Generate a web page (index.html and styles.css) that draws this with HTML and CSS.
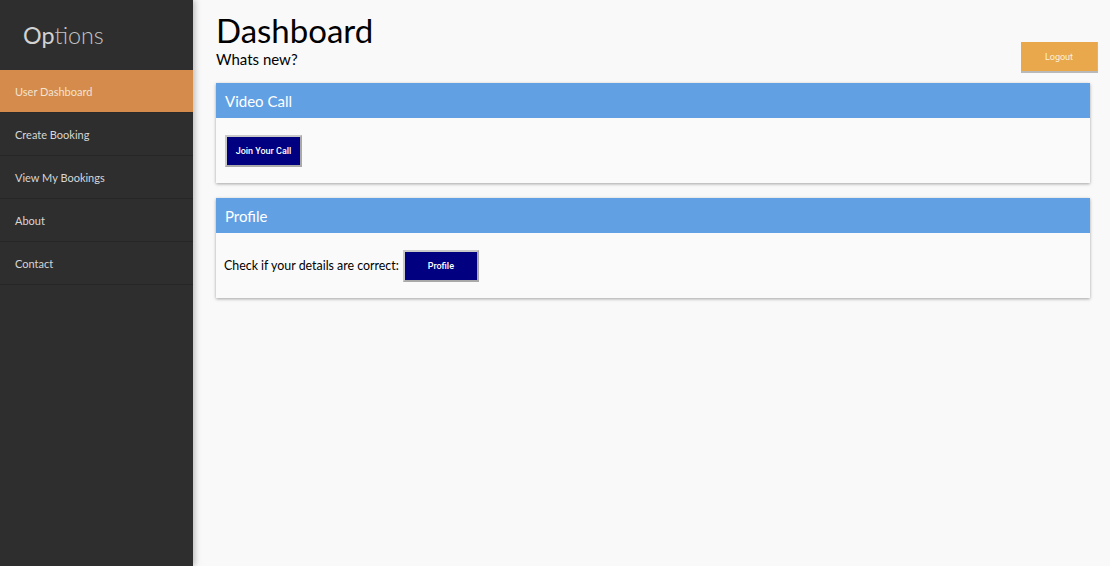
FILE: index.html
```html
<!DOCTYPE html>
<html>
<head>
<meta charset="utf-8">
<link rel="stylesheet" href="styles.css">
</head>
<body>
<div class="layout">
  <aside class="sidebar">
    <div class="brand"><span class="brand-strong">Op</span>tions</div>
    <nav class="nav">
      <a class="nav-item active">User Dashboard</a>
      <a class="nav-item">Create Booking</a>
      <a class="nav-item">View My Bookings</a>
      <a class="nav-item">About</a>
      <a class="nav-item">Contact</a>
    </nav>
  </aside>
  <main class="main">
    <header class="top">
      <div class="titles">
        <h1 class="title">Dashboard</h1>
        <div class="subtitle">Whats new?</div>
      </div>
      <button class="logout">Logout</button>
    </header>
    <section class="card">
      <div class="card-head">Video Call</div>
      <div class="card-body">
        <button class="btn">Join Your Call</button>
      </div>
    </section>
    <section class="card">
      <div class="card-head">Profile</div>
      <div class="card-body">
        <span class="label">Check if your details are correct:</span>
        <button class="btn btn-wide">Profile</button>
      </div>
    </section>
  </main>
</div>
</body>
</html>
```
FILE: styles.css
```css
html, body {
  margin: 0;
  padding: 0;
  height: 100%;
}
body {
  font-family: Lato, "Liberation Sans", sans-serif;
  background: #f9f9f9;
  color: #000;
}
.layout {
  display: flex;
  height: 566px;
}
.sidebar {
  width: 193px;
  flex: none;
  background: #2e2e2e;
  box-shadow: 2px 0 6px rgba(0,0,0,0.25);
  position: relative;
  z-index: 1;
}
.brand {
  height: 70px;
  display: flex;
  align-items: center;
  padding-left: 23px;
  padding-bottom: 1px;
  color: #c4c4c4;
  font-size: 23.3px;
  font-weight: 300;
  box-sizing: border-box;
}
.brand-strong {
  font-weight: 400;
  color: #d2d2d2;
}
.nav {
  display: flex;
  flex-direction: column;
}
.nav-item {
  height: 43px;
  display: flex;
  align-items: center;
  padding-left: 15px;
  font-size: 11px;
  color: #d6d6d6;
  border-bottom: 1px solid #262626;
  box-sizing: border-box;
}
.nav-item.active {
  background: #d48b4b;
  color: #f3e3d2;
  border-bottom-color: #2a2a2a;
}
.main {
  flex: 1;
  padding: 12px 20px 0 23px;
  box-sizing: border-box;
}
.top {
  display: flex;
  justify-content: space-between;
  align-items: flex-start;
  margin-bottom: 10px;
}
.title {
  margin: 0;
  font-size: 33px;
  font-weight: 400;
  line-height: 36px;
}
.subtitle {
  font-size: 15px;
  line-height: 20px;
  margin-top: 1px;
}
.logout {
  margin-top: 30px;
  margin-right: -8px;
  width: 77px;
  height: 31px;
  background: #e8a84b;
  color: #fbf0dd;
  font-family: Roboto, "Liberation Sans", sans-serif;
  font-size: 9px;
  border: none;
  border-right: 1px solid #b9b9b9;
  border-bottom: 2px solid #b9b9b9;
}
.card {
  width: 874px;
  background: #fafafa;
  box-shadow: 0 1px 3px rgba(0,0,0,0.35);
  margin-bottom: 15px;
}
.card-head {
  height: 35px;
  background: #62a0e4;
  color: #fff;
  font-size: 15px;
  display: flex;
  align-items: center;
  padding-left: 9px;
}
.card-body {
  height: 65px;
  display: flex;
  align-items: center;
  padding-left: 9px;
  box-sizing: border-box;
}
.label {
  font-size: 12.4px;
  margin-left: -1px;
  margin-right: 4px;
}
.btn {
  height: 32px;
  width: 77px;
  background: #000080;
  color: #fff;
  font-family: Roboto, "Liberation Sans", sans-serif;
  font-weight: 500;
  font-size: 9px;
  border: 2px solid #a9a9a9;
  border-top-color: #c9c9c9;
  border-left-color: #c9c9c9;
  padding: 0;
}
.btn-wide {
  width: 76px;
}
```
